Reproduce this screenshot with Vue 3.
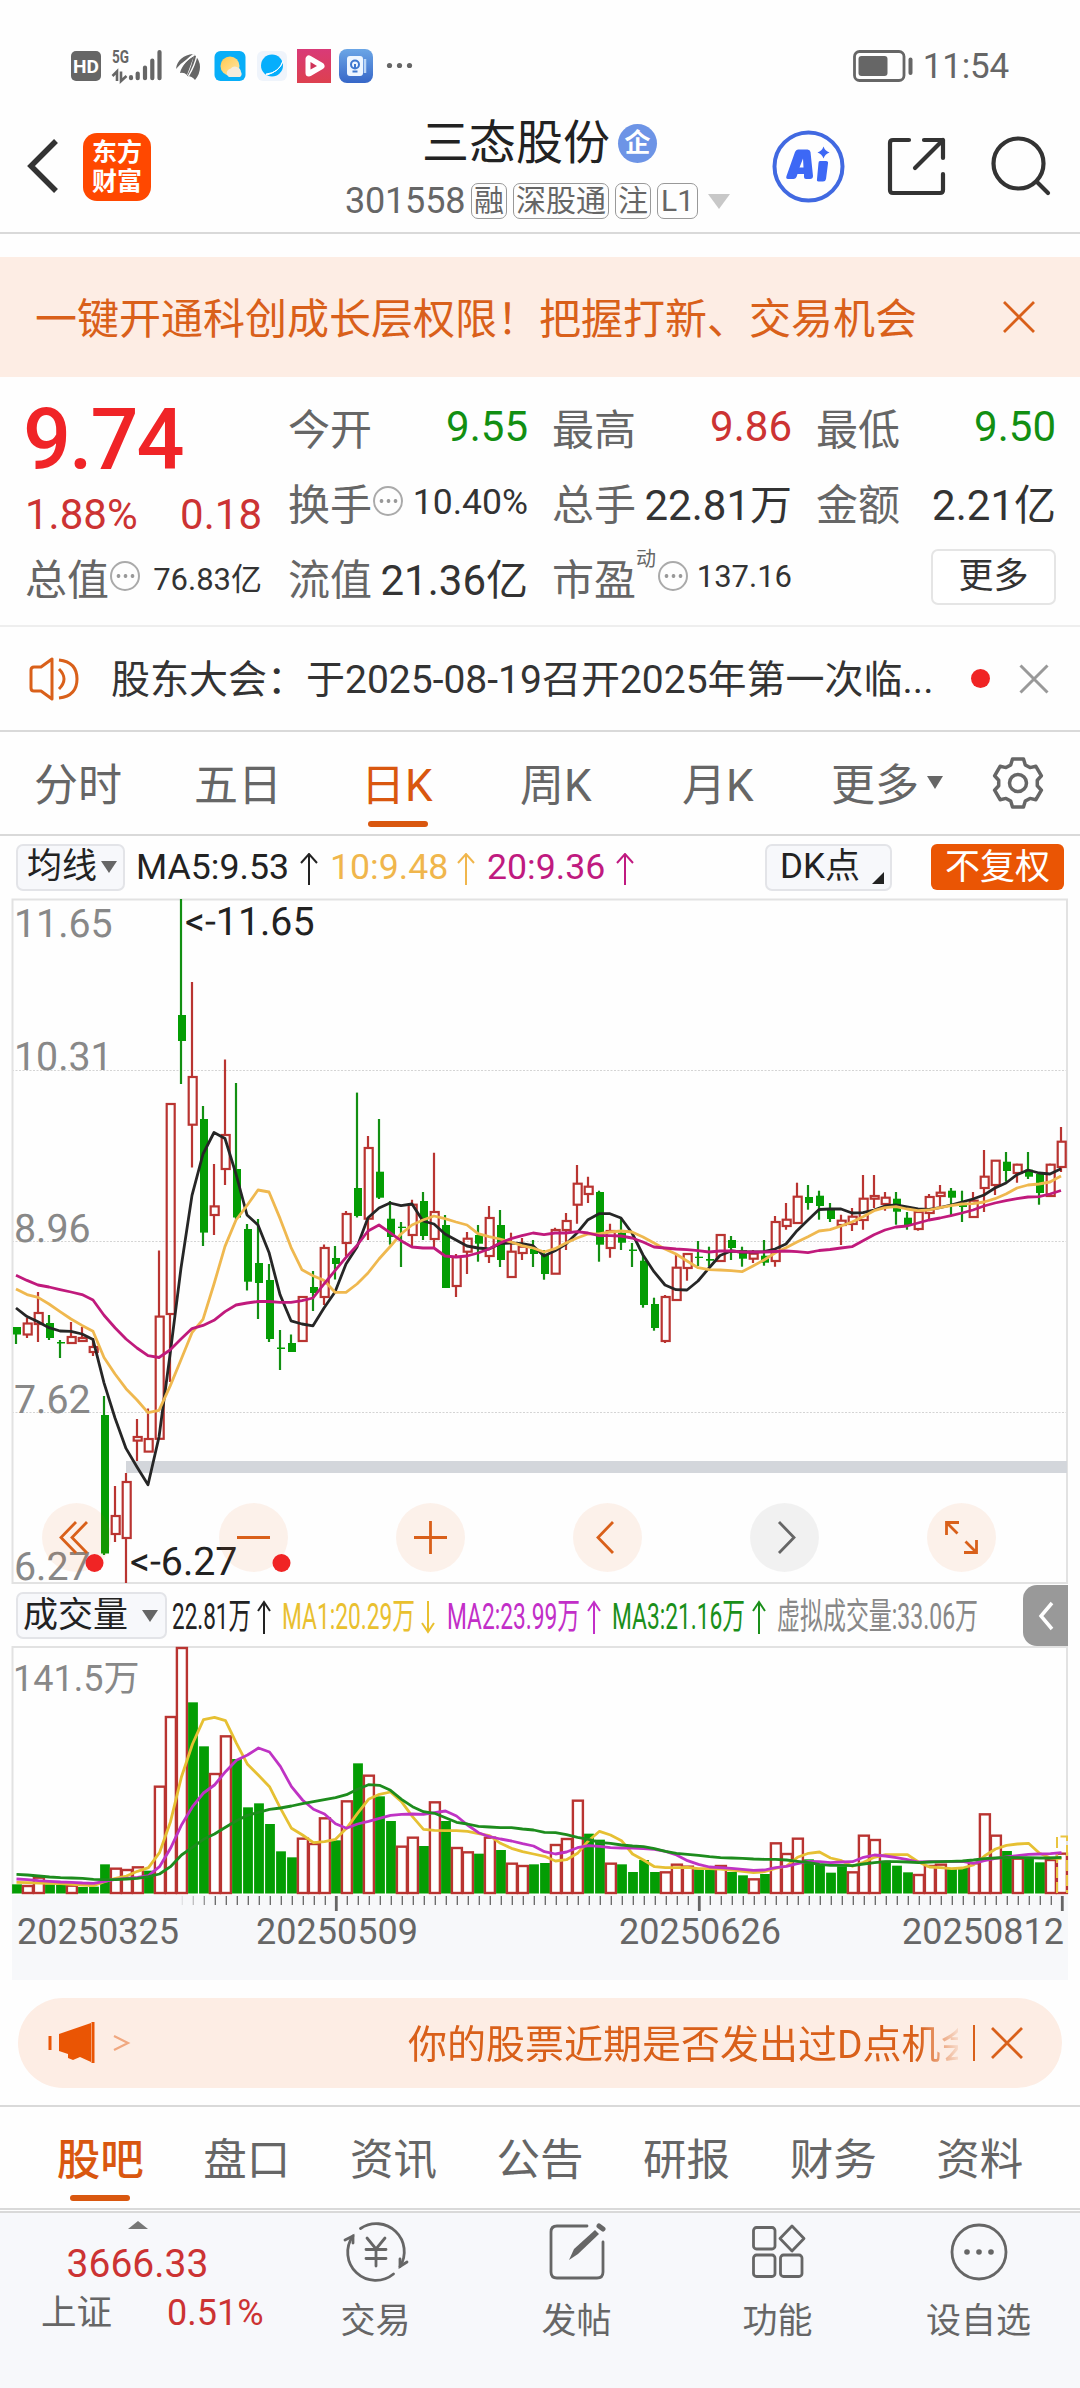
<script setup>
const px = (i) => 16 + 11 * i

// colour, high, body top, body bottom, low
const candles = `g 1327 1327 1334.5 1344;r 1318 1323.5 1334.5 1338;r 1292 1313 1324 1342;g 1315 1323 1338 1340;g 1340 1342 1343.5 1358;r 1322 1337 1343 1343;r 1327 1338 1341 1341;r 1338 1347 1352 1356;g 1396 1415 1553.5 1555;r 1486 1516 1534 1542;r 1473 1482 1538 1583;r 1419 1437 1440.6 1461;r 1408.5 1439 1451.6 1452;r 1250.5 1316.6 1438.8 1439;r 1104 1104 1314 1382;g 899 1015 1041 1084;r 982 1077 1124.7 1167.5;g 1106 1119 1232.6 1246;r 1164 1206.4 1215 1235;r 1059.5 1135 1169 1185;g 1083 1169 1217.5 1219;g 1224 1229 1281.7 1290.5;g 1219 1263 1283 1319;g 1264 1280 1339 1342;g 1330 1347.5 1349 1370;g 1334.5 1343 1352 1352;r 1297 1297 1341 1341;g 1271 1287 1293 1311;r 1244.5 1248 1297 1305;g 1246 1258 1264 1279.5;r 1211 1214 1243 1256;g 1092.6 1188 1216 1217.5;r 1136 1148 1218.7 1240;g 1119 1171.7 1197.7 1199;g 1201 1218.7 1237 1244.7;g 1222 1226.7 1228 1267;r 1199.7 1204.7 1235 1246.7;g 1192 1201 1236 1240;r 1152.7 1212 1239 1247;g 1215 1225 1288 1288;r 1254 1257 1286 1297;r 1232 1238.7 1251.7 1274;g 1225 1235 1243.7 1261.7;r 1206 1218 1256 1263;g 1210 1225 1260 1267;r 1232.7 1251.7 1277 1277;r 1238 1246.7 1253 1260;g 1240 1249 1254 1267;g 1250 1254 1274 1279.7;r 1227.7 1230 1273.7 1274;r 1213 1221 1230 1250;r 1165 1183.7 1204.7 1223.7;r 1176.7 1186.7 1194 1203;g 1190.7 1192 1244.7 1261.7;r 1223.7 1231 1248 1257.7;g 1218 1232.7 1242.7 1250;g 1243 1249.5 1251 1267;g 1255 1260.7 1305 1307.7;g 1297.7 1304 1328 1330.7;r 1295 1297 1341 1343;r 1254 1267.7 1300 1300;r 1254 1254 1268 1280.7;g 1241 1256.7 1258 1266;g 1246.7 1259 1260.7 1266.7;r 1235 1235 1261 1261;g 1236 1240 1248 1260;g 1246.7 1250 1258.7 1266.7;r 1250 1253.7 1258.7 1263;g 1240 1255.7 1262.7 1265.7;r 1216 1222 1261 1266.7;r 1203 1219.7 1226 1229.7;r 1182.7 1196.7 1223 1223;g 1185 1197 1203 1209.7;g 1190.7 1195.7 1206 1219.7;g 1203 1210 1219 1222;r 1214.7 1220.7 1225 1245;r 1208 1216.7 1224 1231;r 1175 1198.7 1220 1229.7;r 1175 1196 1198.7 1208;r 1192 1197.7 1204 1210.7;g 1192 1198.7 1211.7 1224.7;g 1212 1217.7 1226 1229.7;r 1212 1212 1229 1230.7;r 1194 1197 1213 1220;r 1185 1192.7 1196 1206.7;g 1188 1190.7 1197.7 1215;g 1190.7 1202.7 1207 1222;r 1192 1200.7 1217 1217;r 1150 1176.7 1188 1212;r 1160.7 1160.7 1185 1195;g 1152 1161.7 1171 1181.7;r 1163.7 1164.7 1173 1182.7;g 1152 1169.7 1176.7 1179;g 1173.7 1174 1193 1204.7;r 1163.7 1164.7 1196 1196;r 1127 1141.7 1167 1172`
  .split(';')
  .map((s, i) => {
    const [c, h, t, b, l] = s.split(' ')
    return { x: px(i), up: c === 'r', h: +h, t: +t, b: +b, l: +l }
  })

const line = (s, f = (v) => v, dx = 0) =>
  s.split(' ').map((v, i) => `${px(i) + dx},${f(+v).toFixed(1)}`).join(' ')

const ma5 = line('1308 1316.6 1321.7 1327.7 1331 1331.3 1334 1339.6 1382.8 1418 1448.4 1467 1484.7 1437 1355 1268 1195.4 1154 1132.5 1138.5 1174 1215 1225 1252.4 1294.6 1320.8 1324 1325.8 1308 1292 1264 1247 1217.7 1208 1203 1205.7 1204 1221 1224 1234 1240 1246 1248 1249 1243.7 1243 1243.7 1245.7 1256 1250.7 1244 1233 1219.7 1213.7 1213.7 1218 1233 1255 1271.7 1285 1289.7 1290 1281 1268 1255.5 1251 1252 1252 1251.7 1249 1244 1230.7 1220 1209.5 1209 1209 1213 1212.7 1210 1206 1205 1207 1209 1209.3 1207.7 1205 1202 1199 1195 1188 1183 1174.7 1170 1173 1174 1168.7')
const ma10 = line('1289 1294.6 1297.4 1304 1311.6 1319 1325.4 1331.3 1357.5 1374 1388.7 1400 1412.6 1410.3 1386.4 1359.8 1332.7 1319.4 1284 1246.4 1220 1205.5 1190 1192 1218.4 1247.3 1269.8 1275.8 1280.4 1292.3 1292.3 1284 1273 1259 1246.7 1234 1225 1220 1216 1218.7 1222 1225 1233.7 1236.7 1239 1242 1245.7 1248 1252 1248.7 1243 1238 1234 1234 1232 1231 1232 1237 1243 1249 1254 1261 1267.7 1269.7 1270 1270.7 1271.7 1266 1260 1253 1247.7 1242 1236.7 1231 1229.7 1226 1222 1216.7 1210.7 1207.7 1206.7 1209 1210.7 1210 1207.7 1205.7 1204 1203.7 1202 1198.7 1194 1188 1185 1184 1182 1176')
const ma20 = line('1275.3 1280.4 1285 1287 1289.6 1292 1294.6 1300 1315.3 1327.7 1339 1348 1355.7 1357.5 1350 1339 1328.6 1325.4 1320.3 1311.6 1305 1303 1301.5 1301.5 1302.4 1302.4 1300.6 1298 1284 1270.7 1257.4 1245.5 1231 1225 1232.7 1240.7 1247 1248 1248 1256 1257 1256 1253 1249 1243 1238.7 1235.7 1233 1234.7 1233 1233 1231.7 1233 1235.7 1235.7 1236 1238 1242 1247 1248 1249 1249.7 1250.7 1252 1251 1251 1252 1252 1252 1251.5 1251 1251.7 1252.7 1250.5 1249.5 1248 1246.7 1240.7 1234.7 1230 1227 1226 1223 1220 1218 1215.7 1213 1210 1206 1203 1200.7 1198.7 1197 1196.7 1194 1190.5')

const vy = (v) => 1630 + v / 3
const volumes = 'g763 r768 r743 g763 g765 r767 g771 g770 g703 r716 r720 r712 g722 r470 r261 r54 g217 g349 r432 r319 g387 g532 g520 g582 g664 g682 r626 r642 r565 g631 r514 g400 r437 g499 g573 r650 r623 g648 r517 g573 r654 r667 g671 r623 g660 r701 r708 g703 g699 r645 r627 r512 g611 g629 r701 g703 g726 g690 g726 r727 r704 r710 g718 g720 r708 g726 g736 r748 g732 r640 r672 r626 g688 g702 g728 g709 r727 r617 r630 g692 g707 g727 r735 r708 r704 g717 g712 r700 r553 r617 g663 r686 g683 g697 r690 r671'
  .split(' ')
  .map((s, i) => ({ x: px(i) + 0.7, up: s[0] === 'r', y: vy(+s.slice(1)) }))

const vol5 = line('757 758 759 760 761 763 765 767 755 745 738 724 713 668 575 440 342 269 262 272 340 403 436 470 535 595 615 638 635 628 595 550 508 493 486 515 560 598 601 602 602 604 611 617 640 655 665 672 679 693 689 670 632 604 615 632 672 690 710 713 713 712 716 716 717 720 724 728 725 715 708 682 670 666 684 692 709 697 682 674 674 674 696 711 713 716 714 705 678 657 646 642 640 670 684 686', vy, 0.5)
const vol10 = line('747 749 752 754 756 757 759 760 754 748 745 742 737 710 655 585 530 489 465 425 391 375 354 366 410 470 510 538 552 581 595 582 574 565 556 553 552 553 548 543 558 585 608 620 627 633 641 648 665 672 666 653 647 649 653 654 654 656 658 664 675 692 703 711 713 715 718 721 720 713 709 701 694 695 698 696 695 682 675 678 683 689 696 695 695 695 694 700 692 685 681 677 673 672 671 668', vy, 0.5)
const vol20 = line('733 735 738 741 743 744 745 748 749 749 747 745 740 732 710 675 652 628 612 592 572 556 547 538 534 528 521 515 509 503 494 478 464 466 481 508 530 545 550 563 577 582 589 591 593 593 597 600 607 608 614 622 628 637 640 645 648 650 656 664 670 673 676 680 683 684 685 687 688 688 690 694 698 703 706 706 707 702 698 695 695 696 698 696 695 694 693 690 686 684 682 683 683 684 684 682', vy, 0.5)

const ticks = Array.from({ length: 81 }, (_, k) => k + 15).map((i) => ({
  x: px(i) + 1.3,
  major: i === 29 || i === 62 || i === 95,
  fade: i === 15 ? 0.15 : i === 16 ? 0.4 : i === 17 ? 0.7 : 1,
}))

const gear = Array.from({ length: 6 }, (_, k) => {
  const a = -90 + 60 * k
  return [[19.5, -22], [24.5, -13], [24.5, 13], [19.5, 22]]
    .map(([r, d]) => {
      const t = ((a + d) * Math.PI) / 180
      return `${(27 + r * Math.cos(t)).toFixed(1)},${(27 + r * Math.sin(t)).toFixed(1)}`
    })
    .join(' ')
}).join(' ')

const up = 'M9 32V1M1 10L9 1L17 10'
const tabs = ['股吧', '盘口', '资讯', '公告', '研报', '财务', '资料']
const legend = [
  { t: '22.81万', x: 172, w: 79, a: 264, c: '#222' },
  { t: 'MA1:20.29万', x: 282, w: 133, a: 428, c: '#e9c02f', down: true },
  { t: 'MA2:23.99万', x: 447, w: 133, a: 594, c: '#c22fc8' },
  { t: 'MA3:21.16万', x: 612, w: 133, a: 759, c: '#1a8f1a' },
  { t: '虚拟成交量:33.06万', x: 777, w: 201, c: '#888' },
]
</script>

<template>
  <div class="page">
    <div class="status">
      <svg width="360" height="44" viewBox="60 44 360 44">
        <defs>
          <linearGradient id="vid" x2="0" y2="1"><stop stop-color="#d93a78" /><stop offset="1" stop-color="#dd404f" /></linearGradient>
          <linearGradient id="blu" x2="0" y2="1"><stop stop-color="#6ba6e6" /><stop offset="1" stop-color="#3767c8" /></linearGradient>
          <linearGradient id="sun" x2="1" y2="1"><stop stop-color="#ffc94d" /><stop offset="1" stop-color="#ffe6a8" /></linearGradient>
        </defs>
        <rect x="71" y="51" width="30" height="30" rx="5" fill="#666" />
        <text x="86" y="72.5" text-anchor="middle" font-size="18.5" font-weight="700" fill="#fff" textLength="26" lengthAdjust="spacingAndGlyphs">HD</text>
        <text x="112" y="63" font-size="17.5" font-weight="700" fill="#666" textLength="17" lengthAdjust="spacingAndGlyphs">5G</text>
        <path d="M131 77.2V78.2M137.7 73.5V78.2M145 67.5V78.2M152.3 60.5V78.2M159.5 52V78.2" stroke="#666" stroke-width="4.2" stroke-linecap="round" />
        <path d="M117 81V71.5L112.5 76M121 71.5V81L126.5 76" fill="none" stroke="#666" stroke-width="2.6" />
        <path d="M176 69C177 60 184 55 193 54Q189 57 186 60Q181 63 176 69Z" fill="#666" />
        <path d="M180 73C182 65 188 59 194 56Q191 64 187 75Q184 72 180 73Z" fill="#666" />
        <path d="M187 76Q192 66 194 54Q200 60 200 67Q200 74 195 80Q192 76 187 76Z" fill="#666" />
        <path d="M178 70.5Q185 60 196 54M188.5 76Q195 65 197 55" fill="none" stroke="#fff" stroke-width="1.3" />
        <rect x="214.5" y="51" width="31" height="30" rx="6" fill="#08aef8" />
        <circle cx="230" cy="66" r="9.5" fill="url(#sun)" />
        <path d="M229 77a4.5 4.5 0 0 1 1.500-8.300a6 6 0 0 1 10.500 3.300a3.500 3.500 0 0 1-1 5Z" fill="#f6ecdc" />
        <rect x="257" y="51" width="30" height="30" rx="6" fill="#eff4fb" />
        <circle cx="272" cy="65.500" r="11" fill="#05aefc" />
        <path d="M266 74Q279 73 283 61Q280 71 267 75Z" fill="#fff" stroke="#fff" stroke-width="1" />
        <rect x="297" y="49" width="34" height="34" fill="url(#vid)" />
        <path d="M309 59V73L321 66Z" fill="none" stroke="#fff" stroke-width="7" stroke-linejoin="round" />
        <path d="M310.500 62V69.500L317 66Z" fill="#cf3358" />
        <rect x="339" y="49" width="34" height="34" rx="8" fill="url(#blu)" />
        <rect x="347" y="56" width="16" height="20" rx="3" fill="#eef6ff" />
        <path d="M365 59V73" stroke="#bcd7f7" stroke-width="2.500" />
        <circle cx="355" cy="64.500" r="4" fill="none" stroke="#3f78cf" stroke-width="2" />
        <path d="M355 64V69M352.500 71.500H357.500" stroke="#3f78cf" stroke-width="2" />
        <g fill="#666"><circle cx="389.500" cy="65.500" r="2.600" /><circle cx="399.500" cy="65.500" r="2.600" /><circle cx="409.500" cy="65.500" r="2.600" /></g>
      </svg>
      <div class="right">
        <svg width="62" height="34" viewBox="0 0 62 34">
          <rect x="1.500" y="2.500" width="49.500" height="29" rx="5" fill="none" stroke="#666" stroke-width="2.800" />
          <rect x="5.500" y="7" width="29" height="20" rx="3" fill="#666" />
          <path d="M57.500 10.500V24" stroke="#666" stroke-width="4" stroke-linecap="round" />
        </svg>
        <span>11:54</span>
      </div>
    </div>

    <header>
      <svg class="back" width="34" height="58" viewBox="0 0 34 58"><path d="M30 4L5 29L30 54" fill="none" stroke="#333" stroke-width="5.500" /></svg>
      <div class="logo"><span>东方</span><span>财富</span></div>
      <div class="title">
        <div class="name"><span>三态股份</span><i>企</i></div>
        <div class="code">
          <span>301558</span><b>融</b><b>深股通</b><b>注</b><b>L1</b>
          <svg width="22" height="15" viewBox="0 0 22 15"><path d="M0 0H22L11 15Z" fill="#c8c8c8" /></svg>
        </div>
      </div>
      <svg class="acts" width="300" height="80" viewBox="765 127 300 80" fill="none" stroke="#333" stroke-width="4.200" stroke-linecap="round" stroke-linejoin="round">
        <circle cx="808.500" cy="166.500" r="34" stroke="#4169e1" stroke-width="4" />
        <path d="M798 149.500H807.500Q810 149.500 810.500 152L813 176Q813 179 810 179H806Q804 179 804 177V174H797.500L796.500 177Q795.500 179 793.500 179H788Q785.500 179 786.500 176L795 152Q796 149.500 798 149.500ZM799.500 167.500H803.500L803 158.500Z" fill="#3d68f5" fill-rule="evenodd" stroke="none" />
        <path d="M820 161H826Q828.500 161 828 163.500L826 179Q825.500 181.500 823 181.500H818.500Q816.500 181.500 817 179L818.500 163Q818.500 161 820 161ZM823.500 146.500Q825 151 829.500 152.500Q825 154 823.500 158.500Q822 154 817.500 152.500Q822 151 823.500 146.500Z" fill="#3d68f5" stroke="none" />
        <path d="M909 140H893Q890 140 890 143V190Q890 193 893 193H940Q943 193 943 190V174M924 140H943V158M943 140L915 168" />
        <circle cx="1018.500" cy="163.500" r="25" /><path d="M1037 182L1048 193" />
      </svg>
    </header>

    <div class="banner">
      <span>一键开通科创成长层权限！把握打新、交易机会</span>
      <svg width="34" height="34" viewBox="0 0 34 34"><path d="M2 2L32 32M32 2L2 32" stroke="#d9601a" stroke-width="2.800" /></svg>
    </div>

    <section class="quote">
      <div class="c0">
        <div class="price">9.74</div>
        <div class="chg"><span>1.88%</span><span>0.18</span></div>
        <div class="cell"><label>总值</label><em class="more"></em><span class="s31">76.83亿</span></div>
      </div>
      <div class="c">
        <div class="cell"><label>今开</label><span class="down">9.55</span></div>
        <div class="cell"><label>换手</label><em class="more"></em><span class="s35">10.40%</span></div>
        <div class="cell"><label>流值</label><span>21.36亿</span></div>
      </div>
      <div class="c">
        <div class="cell"><label>最高</label><span class="rise">9.86</span></div>
        <div class="cell"><label>总手</label><span>22.81万</span></div>
        <div class="cell"><label>市盈</label><sup>动</sup><em class="more"></em><span class="s31">137.16</span></div>
      </div>
      <div class="c">
        <div class="cell"><label>最低</label><span class="down">9.50</span></div>
        <div class="cell"><label>金额</label><span>2.21亿</span></div>
        <div class="cell"><button>更多</button></div>
      </div>
    </section>

    <div class="notice">
      <svg width="52" height="46" viewBox="0 0 52 46" fill="none" stroke="#d9601a" stroke-width="3" stroke-linejoin="round">
        <path d="M2 14Q2 11 5 11H12L23 3V43L12 35H5Q2 35 2 32Z" /><path d="M30 13Q40 23 30 33M30 4Q48 6 48 23Q48 40 30 42" />
      </svg>
      <p>股东大会：于2025-08-19召开2025年第一次临...</p>
      <i></i>
      <svg width="30" height="30" viewBox="0 0 30 30"><path d="M1.500 1.500L28.500 28.500M28.500 1.500L1.500 28.500" stroke="#999" stroke-width="3" /></svg>
    </div>

    <nav class="period">
      <span>分时</span><span>五日</span><span class="on">日K</span><span>周K</span><span>月K</span><span>更多</span>
      <svg class="tri" width="16" height="13" viewBox="0 0 16 13"><path d="M0 0H16L8 13Z" fill="#666" /></svg>
      <svg class="gear" width="54" height="54" viewBox="0 0 54 54" fill="none" stroke="#666" stroke-width="3.500" stroke-linejoin="round"><polygon :points="gear" /><circle cx="27" cy="27" r="8.500" /></svg>
    </nav>

    <div class="ind">
      <div class="chip avg">均线<svg width="16" height="12" viewBox="0 0 16 12"><path d="M0 0H16L8 12Z" fill="#666" /></svg></div>
      <div class="ma dark"><span>MA5:9.53</span><svg width="18" height="33"><path :d="up" /></svg></div>
      <div class="ma gold"><span>10:9.48</span><svg width="18" height="33"><path :d="up" /></svg></div>
      <div class="ma plum"><span>20:9.36</span><svg width="18" height="33"><path :d="up" /></svg></div>
      <div class="chip dk">DK点<svg width="12" height="12" viewBox="0 0 12 12"><path d="M12 0V12H0Z" fill="#222" /></svg></div>
      <div class="fq">不复权</div>
    </div>

    <svg class="kline" width="1080" height="687" viewBox="0 898 1080 687">
      <path d="M12 1070.500H1067M12 1241.500H1067M12 1412.500H1067" stroke="#d4d4d4" stroke-width="1" stroke-dasharray="2 1.500" />
      <path d="M12.500 899.500H1067V1583H12.500Z" fill="none" stroke="#e2e2e2" stroke-width="2" />
      <rect x="126" y="1461" width="941" height="12" fill="#d3d6db" />
      <g font-size="39.300" fill="#888" text-rendering="geometricPrecision">
        <text x="14" y="937">11.65</text><text x="14" y="1070">10.31</text><text x="14" y="1242">8.96</text><text x="14" y="1413">7.62</text><text x="14" y="1580">6.27</text>
      </g>
      <template v-for="c in candles" :key="c.x">
        <template v-if="c.up">
          <path :d="`M${c.x} ${c.h}V${c.t}M${c.x} ${c.b}V${c.l}`" stroke="#b93431" stroke-width="2.200" />
          <rect :x="c.x - 3.3" :y="c.t" width="8" :height="c.b - c.t" fill="none" stroke="#b93431" stroke-width="2.200" />
        </template>
        <template v-else>
          <path :d="`M${c.x} ${c.h}V${c.l}`" stroke="#128f12" stroke-width="2.200" />
          <rect :x="c.x - 3" :y="c.t" width="8" :height="c.b - c.t" fill="#049d04" />
        </template>
      </template>
      <g fill="none" stroke-width="2.800" stroke-linejoin="round">
        <polyline :points="ma5" stroke="#262626" /><polyline :points="ma10" stroke="#efb84f" /><polyline :points="ma20" stroke="#c01a7c" />
      </g>
      <g font-size="39.300" fill="#222" text-rendering="geometricPrecision"><text x="185" y="935">&lt;-11.65</text><text x="130" y="1575">&lt;-6.27</text></g>
      <g fill="#ea5504" fill-opacity=".08">
        <circle cx="76.500" cy="1537.500" r="34.500" /><circle cx="253.500" cy="1537.500" r="34.500" /><circle cx="430.500" cy="1537.500" r="34.500" /><circle cx="607.500" cy="1537.500" r="34.500" />
        <circle cx="784.500" cy="1537.500" r="34.500" fill="#000" fill-opacity=".05" /><circle cx="961.500" cy="1537.500" r="34.500" />
      </g>
      <g fill="none" stroke="#d9601a" stroke-width="2.800">
        <path d="M76 1522L61 1537.500L76 1553M87 1522L72 1537.500L87 1553M237 1537.500H270M414 1537.500H447M430.500 1521V1554M613 1522L598 1537.500L613 1553" />
        <path d="M779 1522L794 1537.500L779 1553" stroke="#666" />
        <path d="M959 1522.500H946.500V1535M947 1523L957.500 1533.500M964 1552.500H976.500V1540M976 1552L965.500 1541.500" />
      </g>
      <circle cx="94.500" cy="1563" r="9" fill="#f02424" /><circle cx="281.500" cy="1563" r="9" fill="#f02424" />
    </svg>

    <div class="volbar">
      <div class="chip vol">成交量<svg width="16" height="12" viewBox="0 0 16 12"><path d="M0 0H16L8 12Z" fill="#666" /></svg></div>
      <svg width="856" height="61" viewBox="167 1585 856 61">
        <g v-for="l in legend" :key="l.t">
          <text :x="l.x" y="1629" font-size="36" :fill="l.c" :textLength="l.w" lengthAdjust="spacingAndGlyphs">{{ l.t }}</text>
          <path v-if="l.a" :d="l.down ? `M${l.a} 1601V1632M${l.a - 6} 1623L${l.a} 1632L${l.a + 6} 1623` : `M${l.a} 1634V1602M${l.a - 6} 1611L${l.a} 1602L${l.a + 6} 1611`" fill="none" :stroke="l.c" stroke-width="2" />
        </g>
      </svg>
      <div class="fold"><svg width="16" height="30" viewBox="0 0 16 30"><path d="M14 2L3 15L14 28" fill="none" stroke="#fff" stroke-width="3.500" /></svg></div>
    </div>

    <svg class="volume" width="1080" height="334" viewBox="0 1646 1080 334">
      <rect x="12" y="1895" width="1056" height="85" fill="#f7f8fa" />
      <path d="M12.500 1894V1647H1067V1894" fill="none" stroke="#e2e2e2" stroke-width="2" />
      <text x="13" y="1691" font-size="36" fill="#888">141.5万</text>
      <template v-for="v in volumes" :key="v.x">
        <rect v-if="v.up" :x="v.x - 4.8" :y="v.y" width="10" :height="1893 - v.y" fill="#fff" stroke="#b93431" stroke-width="2.400" />
        <rect v-else :x="v.x - 4.600" :y="v.y" width="9.800" :height="1893.500 - v.y" fill="#049d04" />
      </template>
      <path d="M1057 1893V1836.500H1067V1893" fill="none" stroke="#e9c440" stroke-width="2" stroke-dasharray="11 4" />
      <g fill="none" stroke-width="2.800" stroke-linejoin="round">
        <polyline :points="vol5" stroke="#e6c033" /><polyline :points="vol10" stroke="#bf33c4" /><polyline :points="vol20" stroke="#1d8c1d" />
      </g>
      <path v-for="t in ticks" :key="t.x" :d="`M${t.x} 1896V${t.major ? 1911 : 1905}`" stroke="#666" :stroke-width="t.major ? 2.800 : 1.300" :opacity="t.fade" />
      <g font-size="36" fill="#666"><text x="17" y="1944">20250325</text><text x="256" y="1944">20250509</text><text x="619" y="1944">20250626</text><text x="902" y="1944">20250812</text></g>
    </svg>

    <div class="promo">
      <svg width="84" height="42" viewBox="0 0 84 42"><path d="M11 12L43 1V40L32 35L25 38L20 36V32L11 29Z" fill="#ea5504" /><path d="M2 14V28M45 0V41" stroke="#ea5504" stroke-width="3" /><path d="M66 14L80 21L66 28" fill="none" stroke="#f0a880" stroke-width="2.200" /></svg>
      <p>你的股票近期是否发出过D点机会</p>
      <i></i>
      <svg width="34" height="34" viewBox="0 0 34 34"><path d="M2 2L32 32M32 2L2 32" stroke="#d9601a" stroke-width="2.800" /></svg>
    </div>

    <nav class="sections"><span v-for="(t, i) in tabs" :key="t" :class="{ on: i === 0 }">{{ t }}</span></nav>

    <footer>
      <div class="index">
        <svg width="20" height="8" viewBox="0 0 20 8"><path d="M10 0L20 8H0Z" fill="#777" /></svg>
        <strong>3666.33</strong>
        <div><span>上证</span><em>0.51%</em></div>
      </div>
      <div class="item">
        <svg width="70" height="62" viewBox="-35 -31 70 62" fill="none" stroke="#666" stroke-width="2.800" stroke-linecap="round">
          <path d="M-15.500 -23.500A28 28 0 0 1 24 14.500M17.500 22A28 28 0 0 1 -23 -16" /><path d="M-31 -12L-23 -16V-9M31 10L24 14.500V7" />
          <path d="M-9 -14L0 -3L9 -14M0 -3V14M-10 -2.500H10M-10 6.500H10" />
        </svg><span>交易</span>
      </div>
      <div class="item">
        <svg width="70" height="62" viewBox="-35 -31 70 62" fill="none" stroke="#666" stroke-width="2.800" stroke-linecap="round">
          <path d="M10 -26H-20Q-26 -26 -26 -20V20Q-26 26 -20 26H20Q26 26 26 20V-10" /><path d="M-8 8L-3 -3L18 -22L22 -18L1 2Z" fill="#666" stroke="none" /><path d="M22 -26L26 -23" stroke-width="5" />
        </svg><span>发帖</span>
      </div>
      <div class="item">
        <svg width="70" height="62" viewBox="-35 -31 70 62" fill="none" stroke="#666" stroke-width="2.800" stroke-linejoin="round">
          <rect x="-24.500" y="-24.500" width="21.500" height="21.500" rx="3" /><rect x="-24.500" y="3" width="21.500" height="21.500" rx="3" /><rect x="2.500" y="3" width="21.500" height="21.500" rx="3" /><path d="M14 -26L26 -13.500L14 -1L2 -13.500Z" />
        </svg><span>功能</span>
      </div>
      <div class="item">
        <svg width="70" height="62" viewBox="-35 -31 70 62" fill="none" stroke="#666" stroke-width="2.800">
          <circle r="27" /><g fill="#666" stroke="none"><circle cx="-12" r="2.800" /><circle r="2.800" /><circle cx="12" r="2.800" /></g>
        </svg><span>设自选</span>
      </div>
    </footer>
  </div>
</template>

<style>
body { background: #fefefe; }
</style>

<style scoped>
.page { width: 1080px; height: 2388px; overflow: hidden; background: #fefefe; font-family: Roboto, "Noto Sans CJK SC", sans-serif; color: #333; display: flex; flex-direction: column; }
.page > * { box-sizing: border-box; flex: none; }
svg { display: block; flex: none; }
p { margin: 0; }
i, em { font-style: normal; }
span, label, p { white-space: nowrap; }

.status { height: 100px; padding: 44px 71px 0 60px; display: flex; justify-content: space-between; align-items: flex-start; }
.status .right { display: flex; align-items: center; height: 44px; font-size: 35px; color: #666; letter-spacing: -.2px; }
.status .right svg { margin-right: 8px; }

header { height: 134px; border-bottom: 2px solid #d9d9d9; display: flex; align-items: flex-start; }
.back { margin: 37px 0 0 26px; }
.logo { margin: 33px 0 0 23px; width: 68px; height: 68px; border-radius: 14px; background: #ff4800; color: #fff; font-size: 25px; font-weight: 700; line-height: 29px; display: flex; flex-direction: column; align-items: center; justify-content: center; }
.title { margin-left: 194px; width: 420px; height: 130px; padding-top: 15px; box-sizing: border-box; }
.name { display: flex; align-items: center; padding-left: 77px; height: 56px; font-size: 47px; line-height: 56px; color: #222; }
.name i { margin-left: 8px; width: 39px; height: 39px; border-radius: 50%; background: #6d94e6; color: #fff; font-size: 26px; font-weight: 700; line-height: 38px; text-align: center; }
.code { display: flex; align-items: center; height: 36px; margin-top: 12px; font-size: 36px; color: #666; gap: 6px; }
.code span { width: 120px; letter-spacing: -.2px; }
.code b { font-weight: 400; font-size: 30px; line-height: 33px; height: 36px; box-sizing: border-box; border: 1.5px solid #999; border-radius: 7px; padding: 0 2px; }
.code b:nth-of-type(4) { padding: 0 3px; }
.code svg { margin-left: 4px; }
.acts { margin-top: 27px; }

.banner { margin-top: 23px; height: 120px; background: #fdede4; color: #d9601a; display: flex; align-items: center; justify-content: space-between; padding: 0 44px 0 35px; font-size: 42px; }
.banner span { padding-bottom: 4px; }

.quote { height: 250px; border-bottom: 2px solid #eee; display: flex; padding: 12px 0 0 25px; }
.c, .c0 { display: flex; flex-direction: column; }
.c0 { width: 237px; margin-right: 26px; }
.c { width: 240px; margin-right: 24px; }
.cell { height: 75px; display: flex; align-items: center; font-size: 42px; color: #333; }
.cell label { color: #666; }
.cell span { margin-left: auto; }
.cell .down { color: #128f12; }
.cell .rise { color: #cc3333; }
.cell .s31 { font-size: 31px; }
.cell .s35 { font-size: 35.5px; }
.price { height: 94px; line-height: 104px; font-size: 84.5px; font-weight: 500; color: #f02427; letter-spacing: -2px; margin-left: -2px; }
.chg { height: 56px; display: flex; justify-content: space-between; align-items: center; padding-top: 6px; box-sizing: border-box; color: #cc3333; font-size: 42px; }
.more { width: 30px; height: 30px; box-sizing: border-box; border: 2px solid #aaa; border-radius: 50%; margin: -2px 0 0 1px; background: radial-gradient(circle, #999 1.6px, transparent 2.2px) center / 7px 26px; background-clip: content-box; padding: 0 2.500px; }
.cell sup { font-size: 20px; color: #666; align-self: flex-start; line-height: 20px; margin-top: 10px; margin-right: 1px; }
.cell button { margin-left: auto; width: 125px; height: 56px; border: 2px solid #e5e5e5; border-radius: 7px; background: #fff; font: 35px/48px Roboto, "Noto Sans CJK SC", sans-serif; color: #333; padding: 0; }

.notice { height: 105px; border-bottom: 2px solid #d9d9d9; display: flex; align-items: center; padding: 0 31px 0 29px; }
.notice p { margin-left: 30px; font-size: 39px; width: 830px; padding-bottom: 5px; }
.notice i { margin-left: 30px; width: 19px; height: 19px; border-radius: 50%; background: #f02424; margin-right: auto; }

.period { height: 104px; border-bottom: 2px solid #d9d9d9; display: flex; align-items: center; font-size: 44px; color: #666; padding-left: 34px; }
.period span { width: 88px; position: relative; line-height: 64px; padding-top: 6px; }
.period span:nth-child(1) { margin-right: 72px; }
.period span:nth-child(2) { margin-right: 79px; }
.period span:nth-child(3) { margin-right: 71px; }
.period span:nth-child(4) { margin-right: 74px; }
.period span:nth-child(5) { margin-right: 61px; }
.on { color: #d9570f; }
.period .on { color: #d9570f; }
.period .on::after { content: ""; position: absolute; left: 7px; bottom: -9px; width: 60px; height: 6px; border-radius: 3px; background: #d9570f; }
.tri { margin: -2px 48px 0 8px; }

.ind { height: 62px; display: flex; align-items: center; padding-left: 16px; font-size: 35.7px; }
.chip { box-sizing: border-box; height: 47px; border: 2px solid #e3e4e8; border-radius: 7px; background: #f7f8fb; color: #222; font-size: 35px; display: flex; align-items: center; line-height: 42px; }
.avg { width: 109px; padding-left: 9px; margin-right: 11px; }
.avg svg { margin-left: 4px; }
.ma { display: flex; align-items: center; justify-content: space-between; margin-right: 12px; }
.ma svg { margin-top: 4px; fill: none; stroke: currentColor; stroke-width: 2; }
.dark { width: 182px; color: #222; }
.gold { width: 145px; color: #f0b64c; }
.plum { width: 147px; color: #c01a80; }
.dk { width: 127px; padding-left: 13px; margin-left: auto; }
.dk svg { margin: 22px 0 0 12px; }
.fq { margin: 0 16px 0 39px; width: 133px; height: 46px; background: #ea5504; border-radius: 6px; color: #fff; font-size: 35px; line-height: 47px; text-align: center; }

.volbar { height: 61px; display: flex; align-items: center; }
.vol { width: 151px; margin-left: 16px; padding-left: 5px; }
.vol svg { margin-left: 14px; }
.fold { width: 45px; height: 61px; border-radius: 14px 0 0 14px; background: #999; display: flex; align-items: center; justify-content: center; }

.promo { margin: 18px 18px 0; height: 90px; border-radius: 45px; background: #fdede4; color: #d9601a; display: flex; align-items: center; padding: 0 38px 0 30px; }
.promo p { margin-left: 276px; width: 550px; font-size: 39px; padding-bottom: 5px; overflow: hidden; -webkit-mask-image: linear-gradient(90deg, #000 93%, transparent 101%); mask-image: linear-gradient(90deg, #000 93%, transparent 101%); }
.promo i { width: 2px; height: 36px; background: #d9601a; margin-left: 15px; margin-right: auto; }

.sections { margin-top: 17px; height: 105px; border-top: 2px solid #d9d9d9; border-bottom: 2px solid #d9d9d9; display: flex; padding: 0 27px; }
.sections span { flex: 1; text-align: center; font-size: 43.5px; line-height: 108px; height: 101px; color: #666; position: relative; }
.sections .on { color: #d9570f; font-weight: 500; }
.sections .on::after { content: ""; position: absolute; left: 50%; margin-left: -30px; bottom: 7px; width: 60px; height: 6px; border-radius: 3px; background: #d9570f; }

footer { margin-top: 1px; height: 177px; border-top: 2px solid #d9d9d9; background: #f7f8fb; display: flex; color: #666; }
.index { width: 275px; display: flex; flex-direction: column; align-items: center; padding-top: 8px; }
.index strong { font-weight: 400; font-size: 39px; line-height: 46px; color: #cc3333; margin-top: 12px; }
.index div { display: flex; gap: 55px; font-size: 36px; line-height: 50px; margin: 1px 0 0 29px; align-self: stretch; padding-left: 12px; }
.index em { color: #cc3333; }
.index span { font-size: 35.5px; }
.item { width: 201px; display: flex; flex-direction: column; align-items: center; padding-top: 8px; }
.item span { font-size: 35px; line-height: 50px; margin-top: 14px; }
</style>
